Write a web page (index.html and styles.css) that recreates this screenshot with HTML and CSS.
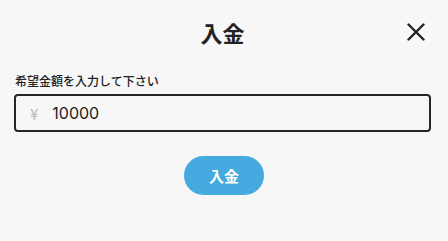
FILE: index.html
```html
<!DOCTYPE html>
<html lang="ja">
<head>
<meta charset="utf-8">
<link rel="stylesheet" href="styles.css">
</head>
<body>
<div class="modal">
  <header class="header">
    <h1 class="title">入金</h1>
    <button class="close" aria-label="close">
      <svg width="18" height="18" viewBox="0 0 18 18"><path d="M1.5 1.5 L16.5 16.5 M16.5 1.5 L1.5 16.5" stroke="#222" stroke-width="2.4" stroke-linecap="round" fill="none"/></svg>
    </button>
  </header>
  <label class="label">希望金額を入力して下さい</label>
  <div class="field">
    <span class="yen">¥</span>
    <span class="amount">10000</span>
  </div>
  <div class="actions">
    <button class="submit">入金</button>
  </div>
</div>
</body>
</html>
```
FILE: styles.css
```css
html, body {
  margin: 0;
  padding: 0;
  background: #f7f7f7;
}
body {
  font-family: "Noto Sans CJK JP", "Noto Sans", sans-serif;
  color: #222;
  width: 448px;
  height: 241px;
  overflow: hidden;
}
.modal {
  padding: 14px 17px 0 14px;
}
.header {
  position: relative;
  display: flex;
  justify-content: center;
  align-items: center;
  height: 36px;
}
.title {
  margin: 0;
  font-size: 22px;
  font-weight: 700;
  line-height: 36px;
  color: #222;
}
.close {
  position: absolute;
  right: 6px;
  top: 9px;
  border: 0;
  background: none;
  padding: 0;
  width: 18px;
  height: 18px;
  display: block;
}
.close svg { display: block; }
.label {
  display: block;
  margin-top: 23px;
  font-size: 12px;
  font-weight: 500;
  line-height: 16px;
  padding-left: 1px;
  color: #222;
}
.field {
  margin-top: 5px;
  height: 38px;
  box-sizing: border-box;
  border: 2px solid #262626;
  border-radius: 4px;
  display: flex;
  align-items: center;
  padding-left: 14px;
  gap: 14px;
}
.yen {
  color: #b5b5b5;
  font-size: 15px;
}
.amount {
  font-size: 16px;
  color: #222;
  font-family: "Inter", "Noto Sans", sans-serif;
}
.actions {
  display: flex;
  justify-content: center;
  margin-top: 24px;
  padding-left: 3px;
}
.submit {
  width: 80px;
  height: 39px;
  border: 0;
  border-radius: 20px;
  background: #45aadf;
  color: #fff;
  font-family: "Noto Sans CJK JP", sans-serif;
  font-weight: 700;
  font-size: 15px;
  padding: 0;
}
```
